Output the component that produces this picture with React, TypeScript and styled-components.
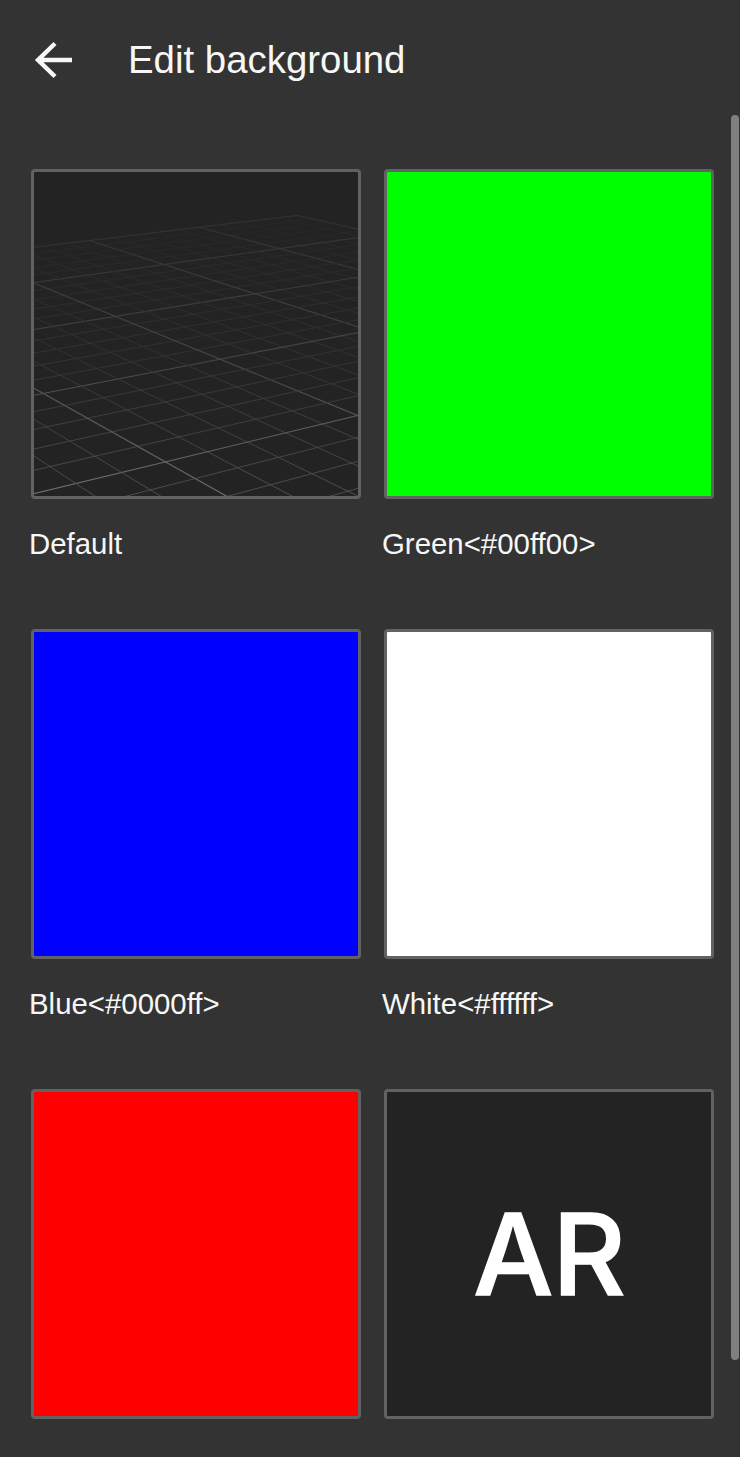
import React from "react";
import styled, { createGlobalStyle } from "styled-components";

const Global = createGlobalStyle`
  html, body { margin: 0; padding: 0; background: #333333; }
  * { box-sizing: border-box; }
`;

const Screen = styled.div`
  position: relative;
  width: 740px;
  height: 1457px;
  overflow: hidden;
  background: #333333;
  color: #f7f7f7;
  font-family: "Liberation Sans", Arial, sans-serif;
`;

const Header = styled.header`
  display: flex;
  align-items: center;
  height: 120px;
  padding-left: 33px;
`;

const BackIcon = styled.svg`
  display: block;
  width: 42px;
  height: 42px;
  flex: none;
`;

const Title = styled.h1`
  margin: 0 0 0 53px;
  font-size: 38.4px;
  font-weight: 400;
  line-height: 44px;
`;

const Grid = styled.main`
  display: grid;
  grid-template-columns: 330px 330px;
  column-gap: 23px;
  grid-auto-rows: 460px;
  padding: 49px 0 0 31px;
`;

const Tile = styled.div`
  display: flex;
  flex-direction: column;
  align-items: flex-start;
`;

const Swatch = styled.div<{ $fill: string }>`
  display: flex;
  align-items: center;
  justify-content: center;
  width: 330px;
  height: 330px;
  flex: none;
  overflow: hidden;
  border: 3px solid #626262;
  border-radius: 4px;
  background: ${(p) => p.$fill};
`;

const Label = styled.div`
  margin: 27px 0 0 -2px;
  font-size: 29.4px;
  line-height: 36px;
  white-space: nowrap;
`;

const ArText = styled.span`
  font-family: Inter, "Liberation Sans", sans-serif;
  font-size: 113px;
  font-weight: 500;
  line-height: 1;
  color: #ffffff;
  letter-spacing: -1px;
  -webkit-text-stroke: 1.5px #ffffff;
`;

const FloorSvg = styled.svg`
  display: block;
  width: 100%;
  height: 100%;
`;

const Scrollbar = styled.div`
  position: absolute;
  top: 115px;
  left: 731px;
  width: 8px;
  height: 1245px;
  border-radius: 4px;
  background: #808080;
`;

type Pt = [number, number];

// Least-squares fit of the floor's perspective to the grid crossings in the picture.
function fitHomography(pairs: [Pt, Pt][]): number[] {
  const rows: number[][] = [];
  pairs.forEach(([[u, v], [x, y]]) => {
    rows.push([u, v, 1, 0, 0, 0, -u * x, -v * x, x]);
    rows.push([0, 0, 0, u, v, 1, -u * y, -v * y, y]);
  });
  const m: number[][] = [];
  for (let a = 0; a < 8; a++) {
    const row: number[] = [];
    for (let b = 0; b < 9; b++) {
      row.push(rows.reduce((s, r) => s + r[a] * r[b], 0));
    }
    m.push(row);
  }
  for (let c = 0; c < 8; c++) {
    let best = c;
    for (let r = c + 1; r < 8; r++) if (Math.abs(m[r][c]) > Math.abs(m[best][c])) best = r;
    [m[c], m[best]] = [m[best], m[c]];
    for (let r = 0; r < 8; r++) {
      if (r === c) continue;
      const f = m[r][c] / m[c][c];
      for (let k = c; k < 9; k++) m[r][k] -= f * m[c][k];
    }
  }
  return m.map((row, i) => row[8] / row[i]);
}

const H = fitHomography([
  [[0, 0], [830, 172]],
  [[1, 0], [530, 205]],
  [[2, 0], [212, 245]],
  [[1, 1], [782, 270]],
  [[2, 1], [442, 320]],
  [[2, 2], [702, 405]],
  [[3, 2], [287, 475]],
  [[3, 3], [597, 600]],
  [[3, 4], [1012, 767]],
  [[4, 4], [440, 905]],
  [[4, 3], [70, 702]],
]);

function project(i: number, j: number): Pt {
  const w = H[6] * i + H[7] * j + 1;
  return [(H[0] * i + H[1] * j + H[2]) / w, (H[3] * i + H[4] * j + H[5]) / w];
}

const SUB = 5;
const MAX = 7;

function floorLines() {
  const out: { a: Pt; b: Pt; major: boolean; key: string }[] = [];
  for (let n = 0; n <= MAX * SUB; n++) {
    const t = n / SUB;
    const major = n % SUB === 0;
    out.push({ a: project(t, 0), b: project(t, MAX), major, key: `d${n}` });
    out.push({ a: project(0, t), b: project(MAX, t), major, key: `c${n}` });
  }
  return out;
}

function Floor() {
  return (
    <FloorSvg viewBox="45 42 967 966" preserveAspectRatio="none" aria-hidden="true">
      <defs>
        <linearGradient id="majorFade" gradientUnits="userSpaceOnUse" x1="0" y1="170" x2="0" y2="1008">
          <stop offset="0" stopColor="#303030" />
          <stop offset="0.5" stopColor="#464646" />
          <stop offset="1" stopColor="#6e6e6e" />
        </linearGradient>
        <linearGradient id="minorFade" gradientUnits="userSpaceOnUse" x1="0" y1="170" x2="0" y2="1008">
          <stop offset="0" stopColor="#262626" />
          <stop offset="0.5" stopColor="#333333" />
          <stop offset="1" stopColor="#545454" />
        </linearGradient>
      </defs>
      {floorLines().map((l) => (
        <line
          key={l.key}
          x1={l.a[0]}
          y1={l.a[1]}
          x2={l.b[0]}
          y2={l.b[1]}
          stroke={l.major ? "url(#majorFade)" : "url(#minorFade)"}
          strokeWidth={l.major ? 3.4 : 2.6}
        />
      ))}
    </FloorSvg>
  );
}

export default function App() {
  return (
    <Screen>
      <Global />
      <Header>
        <BackIcon viewBox="0 0 42 42" aria-hidden="true">
          <path
            d="M39 21H5M22 4.5 5 21l17 16.5"
            fill="none"
            stroke="#f7f7f7"
            strokeWidth="4.4"
            strokeLinecap="butt"
            strokeLinejoin="miter"
          />
        </BackIcon>
        <Title>Edit background</Title>
      </Header>
      <Grid>
        <Tile>
          <Swatch $fill="#232323"><Floor /></Swatch>
          <Label>Default</Label>
        </Tile>
        <Tile>
          <Swatch $fill="#00ff00" />
          <Label>{"Green<#00ff00>"}</Label>
        </Tile>
        <Tile>
          <Swatch $fill="#0000ff" />
          <Label>{"Blue<#0000ff>"}</Label>
        </Tile>
        <Tile>
          <Swatch $fill="#ffffff" />
          <Label>{"White<#ffffff>"}</Label>
        </Tile>
        <Tile>
          <Swatch $fill="#ff0000" />
        </Tile>
        <Tile>
          <Swatch $fill="#232323"><ArText>AR</ArText></Swatch>
        </Tile>
      </Grid>
      <Scrollbar />
    </Screen>
  );
}
